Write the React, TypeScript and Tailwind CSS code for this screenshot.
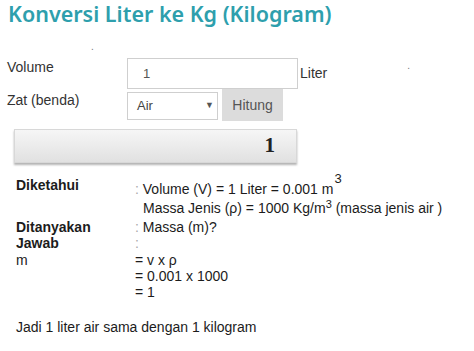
export default function App() {
  return (
    <div className="w-[474px] h-[351px] bg-white text-[#1c1c1c] font-['Liberation_Sans',Arial,sans-serif] overflow-hidden">
      {/* Title */}
      <h1 className="pl-[8px] leading-[28px] text-[21.5px] font-semibold text-[#2e9fad] font-['Noto_Sans',sans-serif]">
        Konversi Liter ke Kg (Kilogram)
      </h1>

      {/* stray dot */}
      <div className="h-[30px] pl-[91px] pt-[11px] leading-[16px] text-[10px] text-[#777]">.</div>

      {/* Form */}
      <div className="flex items-start pl-[7px]">
        <div className="w-[120px] pt-[1px] leading-[16px] text-[14px] text-[#333]">Volume</div>
        <div className="w-[171px] h-[31px] border border-[#cfcfcf] pl-[15px] flex items-center text-[13px] text-[#555]">1</div>
        <div className="ml-[2px] mt-[7px] leading-[16px] text-[14px] text-[#333]">Liter</div>
        <div className="ml-[80px] leading-[16px] text-[10px] text-[#777]">.</div>
      </div>
      <div className="flex items-start pl-[7px]">
        <div className="w-[120px] pt-[3px] leading-[16px] text-[14px] text-[#333]">Zat (benda)</div>
        <div className="mt-[3px] w-[91px] h-[28px] border border-[#cfcfcf] pl-[9px] pr-[3px] flex items-center justify-between text-[13px] text-[#444]">
          <span>Air</span>
          <span className="text-[9px] text-[#555]">▼</span>
        </div>
        <div className="ml-[4px] w-[61px] h-[32px] bg-[#dcdcdc] flex items-center justify-center text-[14px] text-[#555]">Hitung</div>
      </div>

      {/* Result */}
      <div className="ml-[14px] mt-[8px] w-[283px] h-[34px] border border-[#d8d8d8] bg-gradient-to-b from-[#f6f6f6] to-[#e1e1e1] shadow-[0_2px_2px_rgba(0,0,0,0.3)] flex items-center justify-end pr-[21px]">
        <span className="font-['Liberation_Serif',serif] font-bold text-[21px] text-[#222]">1</span>
      </div>

      {/* Penjelasan */}
      <div className="mt-[14px] pl-[16px] text-[14px]">
        <div className="flex">
          <div className="w-[119px] leading-[16px] font-bold">Diketahui</div>
          <div className="pt-[3px] leading-[19px]">
            <div>
              <span className="text-[#aaa]">:</span> Volume (V) = 1 Liter = 0.001 m
              <span className="relative -top-[11px] text-[13px] ml-[1px]">3</span>
            </div>
            <div className="pl-[8px]">
              Massa Jenis (ρ) = 1000 Kg/m<span className="relative -top-[5px] text-[11px]">3</span> (massa jenis air )
            </div>
          </div>
        </div>
        <div className="flex leading-[15px] mt-[1px]">
          <div className="w-[119px] font-bold">Ditanyakan</div>
          <div><span className="text-[#aaa]">:</span> Massa (m)?</div>
        </div>
        <div className="flex leading-[15px] mt-[1px]">
          <div className="w-[119px] font-bold">Jawab</div>
          <div className="text-[#aaa]">:</div>
        </div>
        <div className="flex leading-[16px] mt-[1px]">
          <div className="w-[119px]">m</div>
          <div>
            <div>= v x ρ</div>
            <div>= 0.001 x 1000</div>
            <div>= 1</div>
          </div>
        </div>
        <div className="mt-[19px] leading-[16px]">Jadi 1 liter air sama dengan 1 kilogram</div>
      </div>
    </div>
  )
}
